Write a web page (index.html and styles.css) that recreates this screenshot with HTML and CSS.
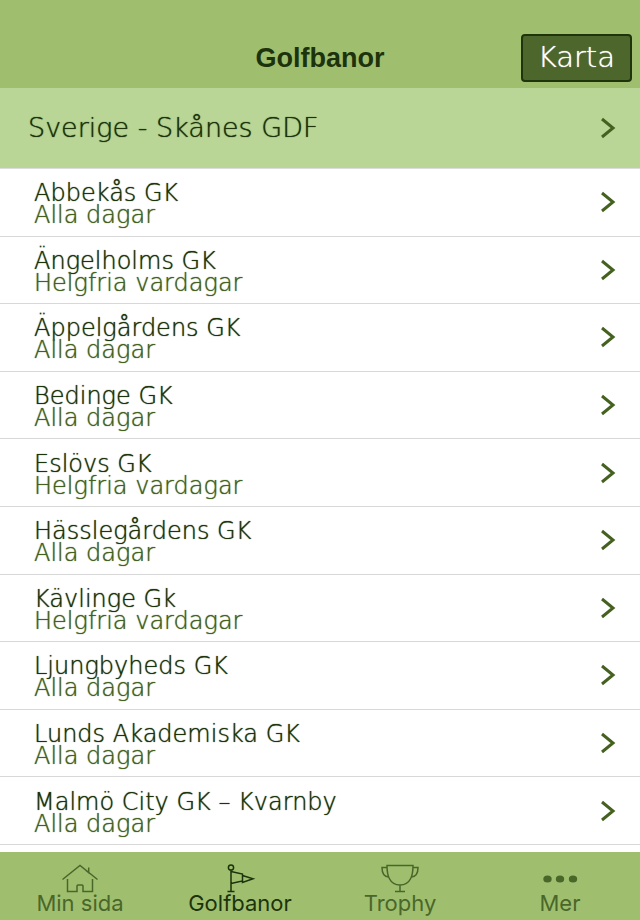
FILE: index.html
```html
<!doctype html>
<html lang="sv">
  <head>
    <meta charset="UTF-8" />
    <meta name="viewport" content="width=device-width, initial-scale=1.0" />
    <title>Golfbanor</title>
    <link rel="stylesheet" href="styles.css">
  </head>
  <body>
    <svg class="defs" aria-hidden="true">
      <symbol id="chevron" viewBox="0 0 16 22">
        <path d="M2 2l11 9-11 9" />
      </symbol>
    </svg>

    <header class="topbar">
      <h1 class="title">Golfbanor</h1>
      <button class="map-button" type="button">Karta</button>
    </header>

    <a class="region" href="#region">
      <span>Sverige - Skånes GDF</span>
      <svg class="chevron"><use href="#chevron" /></svg>
    </a>

    <main class="courses">
      <a class="course" href="#abbekas">
        <span class="course-text"><span class="name">Abbekås GK</span><span class="days">Alla dagar</span></span>
        <svg class="chevron"><use href="#chevron" /></svg>
      </a>
      <a class="course" href="#angelholm">
        <span class="course-text"><span class="name">Ängelholms GK</span><span class="days">Helgfria vardagar</span></span>
        <svg class="chevron"><use href="#chevron" /></svg>
      </a>
      <a class="course" href="#appelgarden">
        <span class="course-text"><span class="name">Äppelgårdens GK</span><span class="days">Alla dagar</span></span>
        <svg class="chevron"><use href="#chevron" /></svg>
      </a>
      <a class="course" href="#bedinge">
        <span class="course-text"><span class="name">Bedinge GK</span><span class="days">Alla dagar</span></span>
        <svg class="chevron"><use href="#chevron" /></svg>
      </a>
      <a class="course" href="#eslov">
        <span class="course-text"><span class="name">Eslövs GK</span><span class="days">Helgfria vardagar</span></span>
        <svg class="chevron"><use href="#chevron" /></svg>
      </a>
      <a class="course" href="#hasslegarden">
        <span class="course-text"><span class="name">Hässlegårdens GK</span><span class="days">Alla dagar</span></span>
        <svg class="chevron"><use href="#chevron" /></svg>
      </a>
      <a class="course" href="#kavlinge">
        <span class="course-text"><span class="name">Kävlinge Gk</span><span class="days">Helgfria vardagar</span></span>
        <svg class="chevron"><use href="#chevron" /></svg>
      </a>
      <a class="course" href="#ljungbyhed">
        <span class="course-text"><span class="name">Ljungbyheds GK</span><span class="days">Alla dagar</span></span>
        <svg class="chevron"><use href="#chevron" /></svg>
      </a>
      <a class="course" href="#lund">
        <span class="course-text"><span class="name">Lunds Akademiska GK</span><span class="days">Alla dagar</span></span>
        <svg class="chevron"><use href="#chevron" /></svg>
      </a>
      <a class="course" href="#malmo">
        <span class="course-text"><span class="name">Malmö City GK – Kvarnby</span><span class="days">Alla dagar</span></span>
        <svg class="chevron"><use href="#chevron" /></svg>
      </a>
    </main>

    <nav class="tabbar">
      <a class="tab" href="#home">
        <svg class="tab-icon" viewBox="0 0 40 30">
          <path d="M2.500 15.500L20 1.500 37.500 15.500M26 6.500l2.700 2.200V3.500M7.500 15v12.500h9.500V22q0-1 1-1h4q1 0 1 1v5.500h9.500V15" />
        </svg>
        <span>Min sida</span>
      </a>
      <a class="tab active" href="#courses">
        <svg class="tab-icon" viewBox="0 0 40 30">
          <circle cx="11" cy="3.500" r="2.600" />
          <path d="M11 6.200v21.300M7.500 27.500h7M11 7.500l11.500 2.500v7L11 19.500M22.500 11.500l10.500 3.200-10.500 3.800z" />
        </svg>
        <span>Golfbanor</span>
      </a>
      <a class="tab" href="#trophy">
        <svg class="tab-icon" viewBox="0 0 40 30">
          <path d="M7 1.500h26c0 4.500-.3 9-2.300 13-2 4-6 6.500-10.700 6.500s-8.700-2.500-10.700-6.500C7.300 10.500 7 6 7 1.500zM7 3.500H2c0 5 1.500 9 6.500 9.500M33 3.500h5c0 5-1.500 9-6.500 9.500M20 21v6.500M15 27.500h10" />
        </svg>
        <span>Trophy</span>
      </a>
      <a class="tab" href="#more">
        <svg class="tab-icon dots" viewBox="0 0 40 30">
          <ellipse cx="7.500" cy="15" rx="4.200" ry="3.500" />
          <ellipse cx="20" cy="15" rx="4.200" ry="3.500" />
          <ellipse cx="33" cy="15" rx="4.200" ry="3.500" />
        </svg>
        <span>Mer</span>
      </a>
    </nav>
  </body>
</html>
```
FILE: styles.css
```css
* {
  box-sizing: border-box;
}
body {
  margin: 0;
  min-height: 100vh;
  display: flex;
  flex-direction: column;
  background: #fff;
  color: #1c330b;
  font-family: "DejaVu Sans", sans-serif;
  font-weight: 200;
}
a {
  color: inherit;
  text-decoration: none;
}
.defs {
  display: none;
}
.topbar {
  display: grid;
  grid-template-columns: 1fr auto 1fr;
  align-items: center;
  padding: 34px 8px 6px;
  background: #9fbf6f;
}
.title {
  grid-column: 2;
  margin: 0;
  font-family: "Liberation Sans", Arial, sans-serif;
  font-size: 27px;
  line-height: 48px;
  font-weight: 700;
}
.map-button {
  justify-self: end;
  height: 48px;
  padding: 0 15px 2px;
  border: 2px solid #1f330c;
  border-radius: 4px;
  background: #4c662b;
  color: #fff;
  font: inherit;
  font-size: 29px;
}
/* thickens the extra light face a little */
.map-button,
.region,
.course {
  text-shadow: 0 0 1px currentColor;
}
.region {
  display: flex;
  align-items: center;
  justify-content: space-between;
  height: 81px;
  padding: 0 24px 0 28px;
  border-bottom: 1px solid #dcdcdc;
  background: #b9d696;
  font-size: 27px;
}
.region span {
  padding-bottom: 2px;
}
.chevron {
  flex: none;
  width: 16px;
  height: 22px;
  fill: none;
  stroke: #44611f;
  stroke-width: 3;
}
.courses {
  flex: 1;
  display: grid;
  grid-auto-rows: 1fr;
  padding-bottom: 7px;
}
.course {
  display: flex;
  align-items: center;
  justify-content: space-between;
  padding: 0 24px 0 34px;
  border-bottom: 1px solid #d8d8d8;
}
.course-text {
  display: flex;
  flex-direction: column;
  padding-top: 4px;
  font-size: 24px;
  line-height: 22px;
}
.days {
  color: #44611f;
}
.tabbar {
  display: grid;
  grid-template-columns: repeat(4, 1fr);
  height: 68px;
  background: #9fbf6f;
}
.tab {
  display: flex;
  flex-direction: column;
  align-items: center;
  padding-top: 12px;
  color: #4a672a;
  font-family: Inter, "Liberation Sans", sans-serif;
  font-size: 22px;
  line-height: 18px;
  font-weight: 400;
}
.tab.active {
  color: #1c330b;
}
.tab-icon {
  width: 40px;
  height: 30px;
  fill: none;
  stroke: currentColor;
  stroke-width: 1.5;
}
.tab-icon.dots {
  fill: currentColor;
  stroke: none;
}
```
